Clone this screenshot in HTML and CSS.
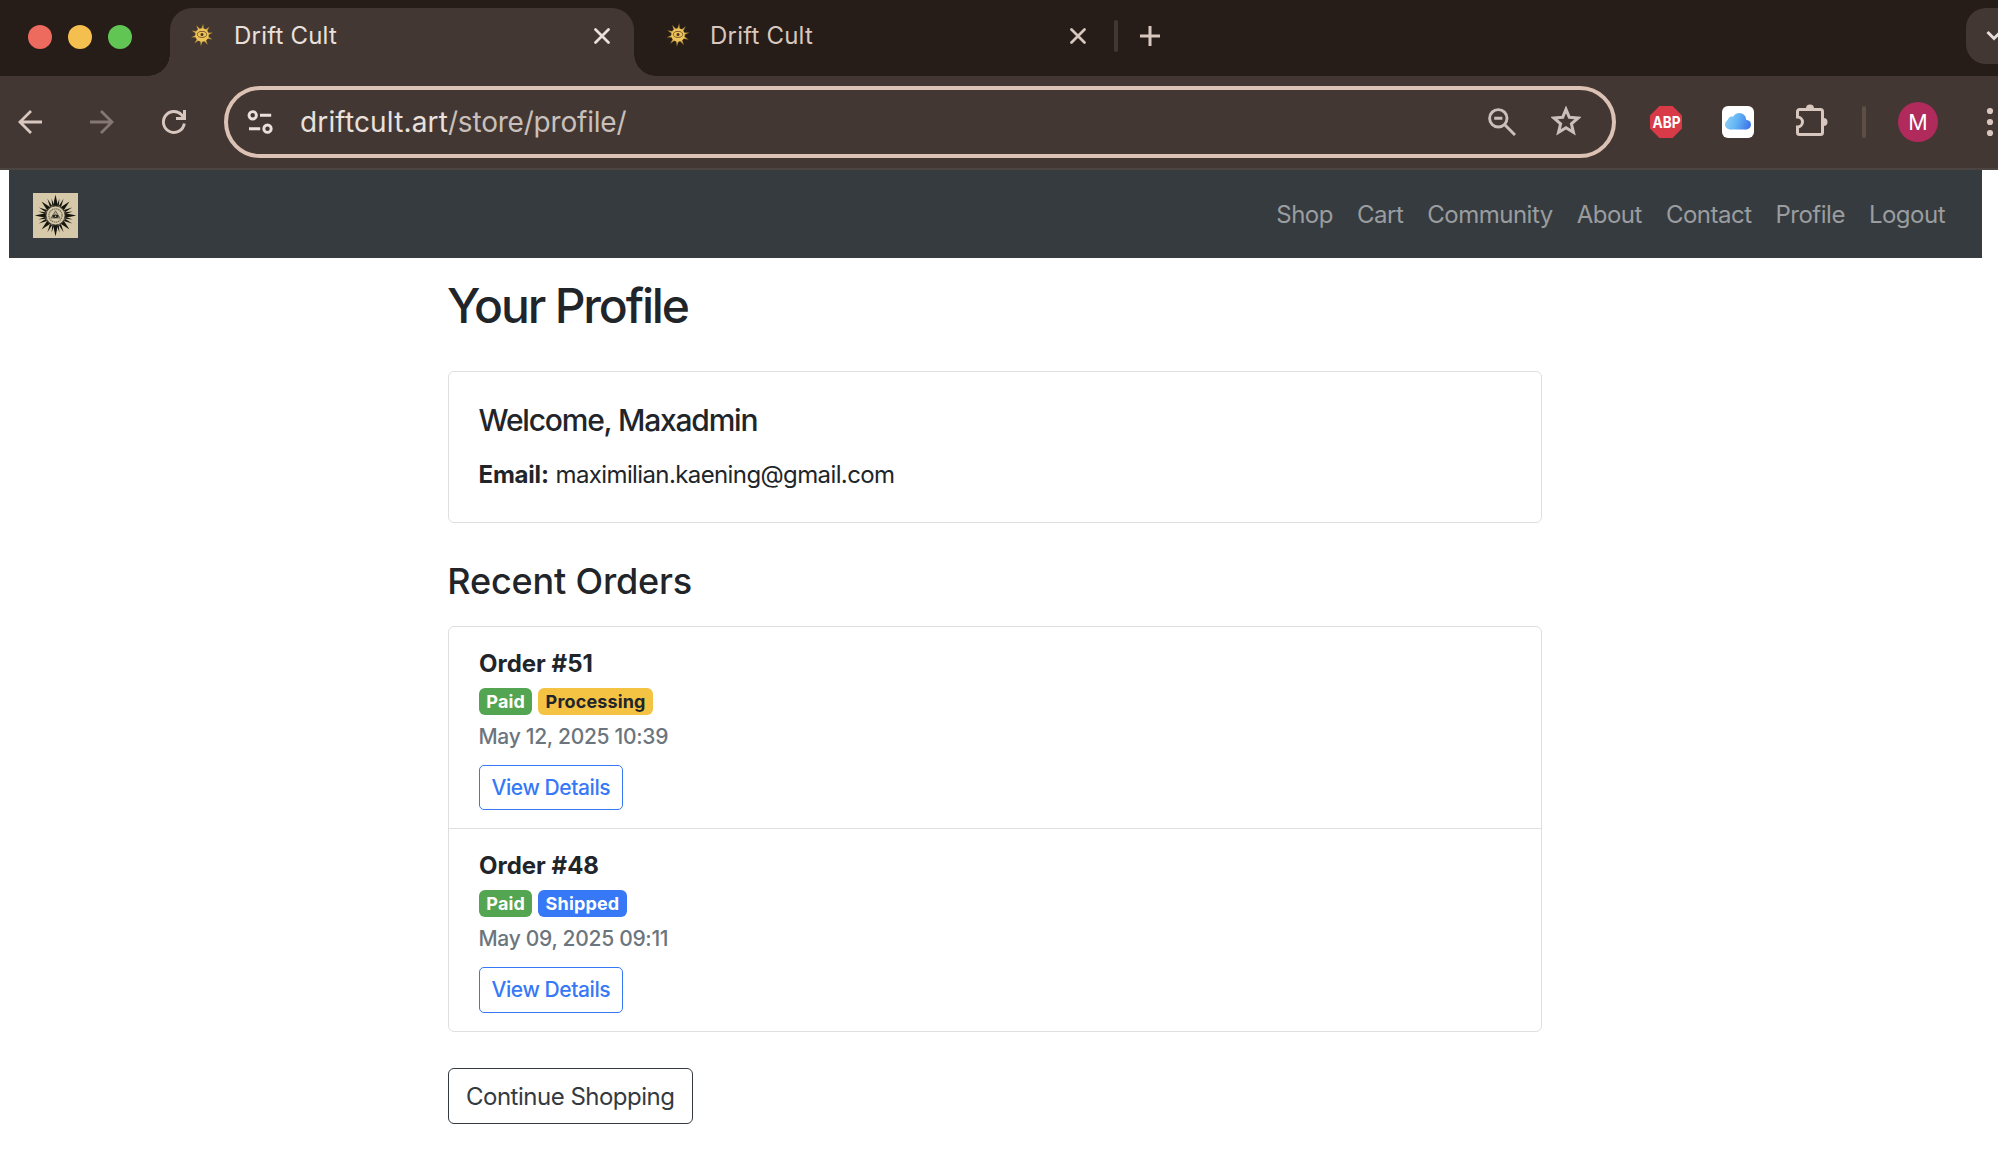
FILE: index.html
```html
<!DOCTYPE html>
<html lang="en">
<head>
<meta charset="utf-8">
<title>Drift Cult</title>
<link rel="stylesheet" href="styles.css">
</head>
<body>
<svg class="defs" aria-hidden="true">
  <defs>
    <g id="favicon-rays">
      <path d="M10.400 7 12 .2 13.600 7z"/>
      <path d="M10.400 7 12 .2 13.600 7z" transform="rotate(36 12 12)"/>
      <path d="M10.400 7 12 .2 13.600 7z" transform="rotate(72 12 12)"/>
      <path d="M10.400 7 12 .2 13.600 7z" transform="rotate(108 12 12)"/>
      <path d="M10.400 7 12 .2 13.600 7z" transform="rotate(144 12 12)"/>
      <path d="M10.400 7 12 .2 13.600 7z" transform="rotate(180 12 12)"/>
      <path d="M10.400 7 12 .2 13.600 7z" transform="rotate(216 12 12)"/>
      <path d="M10.400 7 12 .2 13.600 7z" transform="rotate(252 12 12)"/>
      <path d="M10.400 7 12 .2 13.600 7z" transform="rotate(288 12 12)"/>
      <path d="M10.400 7 12 .2 13.600 7z" transform="rotate(324 12 12)"/>
    </g>
    <symbol id="favicon" viewBox="0 0 24 24">
      <use href="#favicon-rays" fill="#d9b04c" stroke="#2a2214" stroke-width=".3" transform="rotate(6 12 12)"/>
      <circle cx="12" cy="12" r="6.800" fill="#f0c25a"/>
      <ellipse cx="12" cy="11.400" rx="4.600" ry="3" fill="none" stroke="#6b5428" stroke-width=".9"/>
      <circle cx="12" cy="11.400" r="1.500" fill="#4a391a"/>
    </symbol>
    <g id="ray-set">
      <path d="M20.400 13 21.200 7.500 22.500 1.800 23.800 7.500 24.600 13z"/>
      <path d="M21.500 12.500 22.500 5 23.500 12.500z" transform="rotate(13 22.500 22.500)"/>
      <path d="M21.300 12.500 22.500 4 23.700 12.500z" transform="rotate(26 22.500 22.500)"/>
      <path d="M20.300 13 22.500 2.700 24.700 13z" transform="rotate(45 22.500 22.500)"/>
      <path d="M21.300 12.500 22.500 4 23.700 12.500z" transform="rotate(64 22.500 22.500)"/>
      <path d="M21.500 12.500 22.500 5 23.500 12.500z" transform="rotate(77 22.500 22.500)"/>
    </g>
    <symbol id="close" viewBox="0 0 16 16"><path d="M1.500 1.500l13 13M14.500 1.500l-13 13" stroke="currentColor" stroke-width="2.700" fill="none" stroke-linecap="round"/></symbol>
  </defs>
</svg>

<header class="browser">
  <div class="tabstrip">
    <div class="lights"><i class="light red"></i><i class="light yellow"></i><i class="light green"></i></div>
    <div class="tab active">
      <svg class="favicon"><use href="#favicon"/></svg>
      <span class="tab-title">Drift Cult</span>
      <svg class="close"><use href="#close"/></svg>
    </div>
    <div class="tab">
      <svg class="favicon"><use href="#favicon"/></svg>
      <span class="tab-title">Drift Cult</span>
      <svg class="close"><use href="#close"/></svg>
    </div>
    <i class="tab-divider"></i>
    <svg class="plus" viewBox="0 0 20 20"><path d="M10 0v20M0 10h20" stroke="currentColor" stroke-width="3"/></svg>
    <div class="tab-search"><svg width="16" height="12" viewBox="0 0 16 12"><path d="M1.500 2 8 8.500 14.500 2" fill="none" stroke="#e6dedb" stroke-width="3"/></svg></div>
  </div>
  <div class="toolbar">
    <svg class="nav-icon back" viewBox="0 0 24 24"><path d="M24 12H2M13 1 1.900 12 13 23" fill="none" stroke="currentColor" stroke-width="2.800"/></svg>
    <svg class="nav-icon forward" viewBox="0 0 24 24"><path d="M0 12h22M11 1l11.100 11L11 23" fill="none" stroke="currentColor" stroke-width="2.800"/></svg>
    <svg class="nav-icon reload" viewBox="0 0 24 24"><path d="M22.300 13.500A10.500 10.500 0 1 1 19.500 4.700L22 7.500" fill="none" stroke="currentColor" stroke-width="2.900"/><path d="M22.500 0v8.500H14" fill="none" stroke="currentColor" stroke-width="3"/></svg>
    <div class="omnibox">
      <svg class="tune" viewBox="0 0 26 24"><g fill="none" stroke="currentColor" stroke-width="2.900"><circle cx="5.700" cy="5.300" r="3.700"/><circle cx="20.500" cy="18.700" r="3.700"/><path d="M13 5.300h11.200M2 18.700h11.200"/></g></svg>
      <span class="url"><span class="host">driftcult.art</span>/store/profile/</span>
      <svg class="zoom-out" viewBox="0 0 28 28"><g fill="none" stroke="currentColor" stroke-width="2.900"><circle cx="10.300" cy="10.300" r="8.700"/><path d="M16.500 16.500 27 27M6.200 10.300h8.200"/></g></svg>
      <svg class="star" viewBox="0 0 30 30"><path d="M15 3.800l3.100 7.400 8 .7-6.100 5.300 1.900 7.900L15 20.900l-6.900 4.200 1.900-7.900-6.100-5.300 8-.7z" transform="translate(-1.200 -.8) scale(1.080)" fill="none" stroke="currentColor" stroke-width="2.800"/></svg>
    </div>
    <svg class="ext abp" viewBox="0 0 32 32"><path d="M9.400 0h13.200L32 9.400v13.200L22.600 32H9.400L0 22.600V9.400z" fill="#d93a48"/><text x="16.500" y="22" text-anchor="middle" textLength="28" lengthAdjust="spacingAndGlyphs">ABP</text></svg>
    <svg class="ext cloud" viewBox="0 0 32 32"><defs><linearGradient id="sky" gradientUnits="userSpaceOnUse" x1="3" y1="12" x2="29" y2="20"><stop offset="0" stop-color="#8fd0f4"/><stop offset=".45" stop-color="#62b4f5"/><stop offset="1" stop-color="#3c70e8"/></linearGradient></defs><rect width="32" height="32" rx="6" fill="#fff"/><g fill="url(#sky)"><circle cx="8" cy="18.500" r="5"/><circle cx="10" cy="14.800" r="4.300"/><circle cx="17.300" cy="14" r="7"/><circle cx="24.200" cy="18.700" r="4.800"/><path d="M8 15h16.200v8.500H8z"/></g></svg>
    <svg class="ext puzzle" viewBox="0 0 32 32"><path d="M3.500 5.500H24.500a2 2 0 0 1 2 2V28.500a2 2 0 0 1-2 2H3.500a2 2 0 0 1-2-2V23A5 5 0 0 0 1.500 13V7.500a2 2 0 0 1 2-2z" fill="none" stroke="currentColor" stroke-width="3"/><path d="M10 4.500a4 4 0 0 1 8 0zM27.500 14a4 4 0 0 1 0 8z" fill="currentColor"/></svg>
    <i class="toolbar-divider"></i>
    <span class="avatar">M</span>
    <svg class="menu" viewBox="0 0 8 30"><g fill="currentColor"><circle cx="4" cy="4" r="3.100"/><circle cx="4" cy="15" r="3.100"/><circle cx="4" cy="26" r="3.100"/></g></svg>
  </div>
</header>

<nav class="navbar">
  <svg class="logo" viewBox="0 0 45 45">
    <rect width="45" height="45" fill="#d6c9a9"/>
    <g fill="#15150f"><use href="#ray-set"/><use href="#ray-set" transform="rotate(90 22.500 22.500)"/><use href="#ray-set" transform="rotate(180 22.500 22.500)"/><use href="#ray-set" transform="rotate(270 22.500 22.500)"/></g>
    <circle cx="22.500" cy="22.500" r="9.500" fill="#d6c9a9" stroke="#4a4738" stroke-width="1"/>
    <circle cx="22.500" cy="22.500" r="6.600" fill="none" stroke="#7a745e" stroke-width="1.300" stroke-dasharray="1.500 .6"/>
    <path d="M22.500 17.800 27 25H18z" fill="#b5ab8d" stroke="#4a4738" stroke-width=".7"/>
    <ellipse cx="22.500" cy="23.300" rx="3.100" ry="1.700" fill="#24231c"/>
    <circle cx="22.500" cy="23.300" r=".7" fill="#d6c8a6"/>
  </svg>
  <div class="links"><a>Shop</a><a>Cart</a><a>Community</a><a>About</a><a>Contact</a><a>Profile</a><a>Logout</a></div>
</nav>

<main class="container">
  <h1>Your Profile</h1>
  <section class="card">
    <h2 class="welcome">Welcome, Maxadmin</h2>
    <p class="email"><strong>Email:</strong> <span class="address">maximilian.kaening@gmail.com</span></p>
  </section>
  <h2 class="recent">Recent Orders</h2>
  <ul class="orders">
    <li class="order">
      <h3>Order #51</h3>
      <div class="badges"><span class="badge paid">Paid</span><span class="badge processing">Processing</span></div>
      <time class="date">May 12, 2025 10:39</time>
      <a class="details">View Details</a>
    </li>
    <li class="order">
      <h3>Order #48</h3>
      <div class="badges"><span class="badge paid">Paid</span><span class="badge shipped">Shipped</span></div>
      <time class="date">May 09, 2025 09:11</time>
      <a class="details">View Details</a>
    </li>
  </ul>
  <a class="continue">Continue Shopping</a>
</main>
</body>
</html>
```
FILE: styles.css
```css
* { box-sizing: border-box; }
body { margin: 0; background: #fff; color: #212529; font-family: Inter, "Liberation Sans", sans-serif; font-size: 24px; overflow: hidden; }
svg { display: block; flex: none; }
.defs { width: 0; height: 0; position: absolute; }
h1, h2, h3, p, ul { margin: 0; padding: 0; font-weight: 500; }
p { font-weight: 400; }

/* Browser frame */
.browser { width: 1998px; overflow: hidden; }
.tabstrip { display: flex; height: 76px; padding-top: 8px; background: #261d18; color: #d8c7bf; }
.lights { display: flex; gap: 16px; width: 170px; padding: 17px 0 0 28px; }
.light { width: 24px; height: 24px; border-radius: 50%; }
.red { background: #ed6a5e; }
.yellow { background: #f5bf4f; }
.green { background: #61c554; }
.tab { position: relative; display: flex; width: 464px; height: 68px; padding: 15px 24px 0 20px; }
.tab + .tab { padding-left: 32px; padding-right: 12px; }
.active { background: #433733; color: #eae1dd; border-radius: 22px 22px 0 0; }
.active::before, .active::after { content: ""; position: absolute; bottom: 0; width: 22px; height: 22px; }
.active::before { left: -22px; background: radial-gradient(circle at 0 0, transparent 21.5px, #433733 22px); }
.active::after { right: -22px; background: radial-gradient(circle at 100% 0, transparent 21.5px, #433733 22px); }
.favicon { width: 24px; height: 24px; }
.tab-title { flex: 1; margin-left: 20px; line-height: 26px; letter-spacing: .2px; }
.close { width: 16px; height: 16px; margin-top: 5px; }
.tab-divider { width: 4px; height: 32px; margin: 12px 0 0 16px; border-radius: 2px; background: #433733; }
.plus { width: 20px; height: 20px; margin: 18px 0 0 22px; }
.tab-search { width: 56px; height: 56px; margin-left: auto; margin-right: -24px; border-radius: 20px; background: #433733; padding: 22px 0 0 20px; flex: none; }
.toolbar { display: flex; align-items: center; height: 94px; padding-left: 18px; background: #433733; border-bottom: 2px solid #4b4440; color: #d8c7bf; }
.nav-icon { width: 24px; height: 24px; }
.forward { margin-left: 48px; color: #857772; }
.reload { margin-left: 48px; }
.omnibox { display: flex; align-items: center; width: 1392px; height: 72px; margin-left: 38px; padding: 0 31px 0 19px; border: 4px solid #dcc2b4; border-radius: 36px; color: #c9c0bc; }
.tune { width: 26px; height: 24px; color: #eae1dd; }
.url { flex: 1; margin-left: 27px; font-size: 28px; letter-spacing: -.2px; }
.host { color: #eae1dd; letter-spacing: .15px; }
.zoom-out { width: 28px; height: 28px; }
.star { width: 30px; height: 30px; margin-left: 35px; margin-top: -2px; }
.ext { width: 32px; height: 32px; overflow: visible; }
.abp { margin-left: 34px; }
.abp text { font: 700 16.5px Inter, sans-serif; fill: #fff; }
.cloud { margin-left: 40px; }
.puzzle { margin: -4px 0 0 42px; }
.toolbar-divider { width: 4px; height: 32px; margin-left: 34px; border-radius: 2px; background: #5d4e46; }
.avatar { width: 40px; height: 40px; margin-left: 32px; border-radius: 50%; background: #b02a5b; color: #fff; font-size: 21.5px; line-height: 40px; text-align: center; flex: none; }
.menu { width: 8px; height: 30px; margin-left: 48px; }

/* Site navigation */
.navbar { display: flex; justify-content: space-between; width: 1973px; height: 88px; margin-left: 9px; padding: 23px 37px 0 24px; background: #363b3f; }
.logo { width: 45px; height: 45px; }
.links { display: flex; gap: 24px; line-height: 44px; color: #9a9d9f; letter-spacing: -.5px; }

/* Profile */
.container { width: 1094px; margin: 19px 0 0 448px; }
h1 { margin-left: -1px; font-size: 48px; line-height: 58px; letter-spacing: -2.15px; }
.card { height: 152px; margin-top: 36px; padding: 30px; border: 1px solid #dfdfdf; border-radius: 6px; }
.welcome { margin-left: -.5px; font-size: 30px; line-height: 36px; letter-spacing: -1.2px; }
.email { margin-top: 19px; line-height: 36px; margin-left: -.5px; }
.email strong { letter-spacing: -.2px; }
.address { letter-spacing: -.61px; }
.recent { margin: 37px 0 0 -.7px; font-size: 36px; line-height: 42px; letter-spacing: -.18px; }
.orders { margin-top: 24px; list-style: none; border: 1px solid #dfdfdf; border-radius: 6px; }
.order { display: flex; flex-direction: column; align-items: flex-start; height: 201px; padding: 19px 30px 0; }
.order + .order { height: 203px; border-top: 1px solid #dfdfdf; }
h3 { font-size: 24px; line-height: 36px; font-weight: 700; }
.badges { display: flex; gap: 6px; margin-top: 6px; }
.badge { height: 27px; padding: 0 7.3px; border-radius: 6px; color: #fff; font-size: 18px; font-weight: 700; line-height: 27px; letter-spacing: .15px; }
.paid { background: #53a551; }
.processing { background: #f5c344; color: #212529; }
.shipped { background: #3678f6; }
.date { margin: 6px 0 0 -.5px; color: #6c757d; font-size: 21px; line-height: 32px; letter-spacing: -.29px; }
.details { width: 144px; height: 45px; margin-top: 12px; padding: 0 11.5px; border: 1px solid #3678f6; border-radius: 5px; color: #3678f6; font-size: 21px; line-height: 43px; letter-spacing: -.42px; white-space: nowrap; }
.order + .order .details { height: 46px; }
.continue { display: inline-block; width: 245px; height: 56px; margin-top: 36px; padding: 0 17px; border: 1px solid #343a40; border-radius: 6px; color: #343a40; line-height: 55px; letter-spacing: -.5px; white-space: nowrap; }
```
